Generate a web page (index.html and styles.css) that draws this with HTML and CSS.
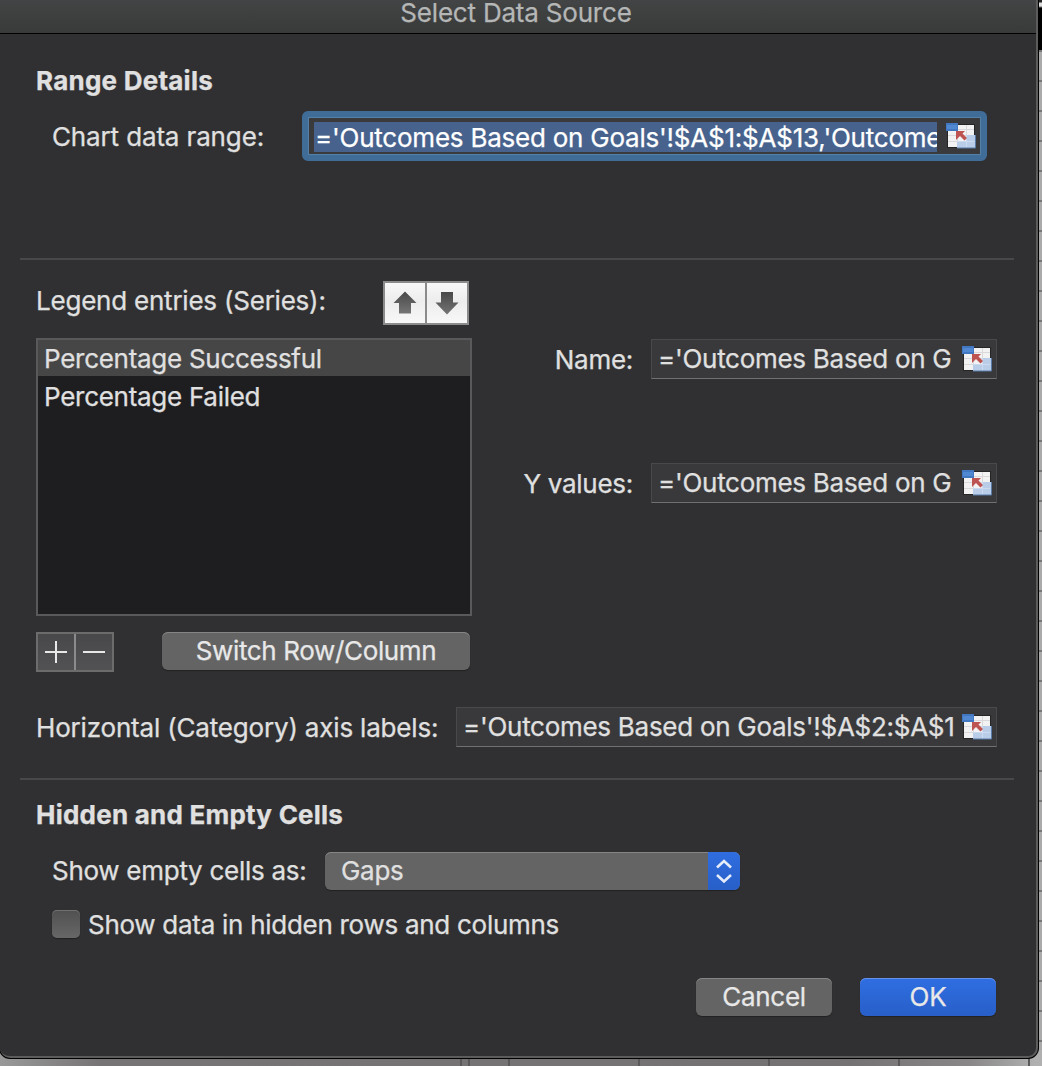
FILE: index.html
```html
<!DOCTYPE html>
<html lang="en">
<head>
<meta charset="utf-8">
<title>Select Data Source</title>
<link rel="stylesheet" href="styles.css">
</head>
<body>
<svg class="defs" width="0" height="0" aria-hidden="true">
  <symbol id="picker" viewBox="0 0 30 26">
    <rect x="1" y="1" width="28" height="24" fill="#252526"/>
    <rect x="2" y="2" width="26" height="22" fill="#f2f2f3"/>
    <path d="M2 12.500H28M2 18.500H28M11.500 2V24M20.500 2V24M12 6.500H28" stroke="#d9d9dc" fill="none"/>
    <path d="M20 12H29V25H11V18H20Z" fill="#b9cde9"/>
    <path d="M20.500 12V24M11 18.500H28" stroke="#cbdaee" fill="none"/>
    <path d="M11 25H29.500V12" stroke="#587ba8" fill="none"/>
    <rect x="0" y="0" width="12" height="8" fill="#4278c2"/>
    <rect x="1" y="2" width="10" height="4" fill="#5188d2"/>
    <path d="M10 8H19L16.500 10.500L21 15L18.500 17.500L14 13L10 17Z" fill="#bd5452"/>
  </symbol>
</svg>
<div class="desktop">
  <div class="sheet-right"></div>
  <div class="sheet-bottom"><i class="c1"></i><i class="c2"></i><i class="c3"></i><i class="c4"></i><i class="c5"></i><i class="c6"></i><i class="c7"></i></div>
  <main class="dialog">
    <header class="titlebar"><span class="t-title">Select Data Source</span></header>

    <section class="range">
      <h2 class="t-range">Range Details</h2>
      <div class="range-row">
        <label class="t-chart">Chart data range:</label>
        <div class="focus-field"><span class="selection"><span class="t-main">='Outcomes Based on Goals'!$A$1:$A$13,'Outcomes</span></span><svg class="picker"><use href="#picker"/></svg></div>
      </div>
    </section>

    <section class="series">
      <div class="left">
        <div class="legend-head">
          <span class="t-legend">Legend entries (Series):</span>
          <div class="arrows">
            <button><svg width="24" height="24" viewBox="0 0 24 24"><path d="M12 .5L23.500 12H18V22.500H6V12H.5Z" fill="url(#ag)"/><defs><linearGradient id="ag" x2="0" y2="1"><stop stop-color="#484848"/><stop offset="1" stop-color="#757575"/></linearGradient></defs></svg></button>
            <button><svg width="24" height="24" viewBox="0 0 24 24"><path d="M6 1H18V11.500H23.500L12 23.500L.5 11.500H6Z" fill="url(#ag)"/></svg></button>
          </div>
        </div>
        <ul class="list">
          <li class="selected"><span class="t-ps">Percentage Successful</span></li>
          <li><span class="t-pf">Percentage Failed</span></li>
        </ul>
        <div class="list-actions">
          <div class="plusminus">
            <button><svg width="22" height="22" viewBox="0 0 22 22"><path d="M0 11H22M11 0V22"/></svg></button>
            <button><svg width="22" height="22" viewBox="0 0 22 22"><path d="M0 11H22"/></svg></button>
          </div>
          <button class="btn switch"><span class="t-switch">Switch Row/Column</span></button>
        </div>
      </div>
      <div class="right">
        <label><span class="t-name">Name:</span></label>
        <div class="field"><span class="value"><span class="t-field">='Outcomes Based on G</span></span><svg class="picker"><use href="#picker"/></svg></div>
        <label><span class="t-y">Y values:</span></label>
        <div class="field"><span class="value"><span class="t-field">='Outcomes Based on G</span></span><svg class="picker"><use href="#picker"/></svg></div>
      </div>
    </section>

    <section class="axis">
      <label><span class="t-axis">Horizontal (Category) axis labels:</span></label>
      <div class="field"><span class="value"><span class="t-cat">='Outcomes Based on Goals'!$A$2:$A$13</span></span><svg class="picker"><use href="#picker"/></svg></div>
    </section>

    <section class="hidden-cells">
      <h2 class="t-hidden">Hidden and Empty Cells</h2>
      <div class="empty-row">
        <label class="t-empty">Show empty cells as:</label>
        <div class="select"><span class="t-gaps">Gaps</span><span class="stepper"><svg width="16" height="26" viewBox="0 0 16 26"><path d="M1 9.500L8 3L15 9.500M1 17L8 23.500L15 17"/></svg></span></div>
      </div>
      <div class="check-row"><span class="checkbox"></span><span class="t-show">Show data in hidden rows and columns</span></div>
    </section>

    <footer>
      <button class="btn"><span class="t-cancel">Cancel</span></button>
      <button class="btn primary"><span class="t-ok">OK</span></button>
    </footer>
  </main>
</div>
</body>
</html>
```

FILE: styles.css
```css
* { box-sizing: border-box; }
body { margin: 0; background: #777; overflow: hidden; -webkit-text-stroke: .25px currentColor; }
body, button { font-family: Inter, "Liberation Sans", sans-serif; font-size: 26px; line-height: 32px; color: #e0e0e0; letter-spacing: -.28px; }
button { border: 0; padding: 0; }
h2 { margin: 0; font-size: 26px; font-weight: 700; line-height: 32px; letter-spacing: .23px; }
svg { display: block; flex: none; }
span, label, h2, li { white-space: pre; }
.defs { position: absolute; }
.desktop { position: relative; width: 1042px; height: 1066px; overflow: hidden; }

.sheet-right { position: absolute; left: 1030px; top: 0; width: 12px; height: 1066px;
  background: linear-gradient(#222 0 2px, #ddd 3px 6px, #000 8px 50px, transparent 50px),
    repeating-linear-gradient(transparent 0 20px, #777 20px 22px, transparent 22px 30px), #aaa; }
.sheet-bottom { position: absolute; left: 0; top: 1050px; width: 1042px; height: 16px;
  background: linear-gradient(90deg, #999 0, #777475 100px, #757273 850px, #898788 970px, #b0b0b0 1035px); }
.sheet-bottom i { position: absolute; top: 0; width: 2px; height: 16px; background: #5b595a; }
.c1 { left: 460px; } .c2 { left: 468px; } .c3 { left: 508px; } .c4 { left: 638px; } .c5 { left: 768px; } .c6 { left: 898px; } .c7 { left: 1028px; }

.dialog { position: relative; width: 1038px; height: 1058px; background: #303032; border: solid #5c5c5c; border-width: 0 2px 2px 0; border-radius: 0 0 10px 10px; box-shadow: 0 0 0 1px #000; }
.titlebar { height: 34px; padding: 0 4px 0 0; background: linear-gradient(#424445, #393b3a); border-bottom: 1px solid #000; display: flex; justify-content: center; line-height: 26px; color: #b5b6b6; letter-spacing: -.2px; }

.range { height: 226px; margin: 0 22px 0 20px; padding: 31px 0 0 16px; border-bottom: 2px solid #48484a; }
.range-row { display: flex; padding: 14px 0 0 16px; align-items: center; }
.t-chart { width: 250px; letter-spacing: -.14px; padding-top: 2px; }
.focus-field { width: 685px; height: 50px; border: 6px solid #3f6d98; border-radius: 6px; background: #3a3a3c; box-shadow: inset 0 0 0 1px #5581a8; display: flex; align-items: center; padding: 0 5px 0 6px; }
.selection { width: 624px; height: 30px; margin: 2px 9px 0 0; padding-left: 1px; line-height: 32px; background: #47638d; color: #fff; overflow: hidden; letter-spacing: -.23px; }
.picker { width: 30px; height: 26px; }
.t-legend { letter-spacing: -.22px; }
.t-axis { letter-spacing: -.18px; }
.t-switch { letter-spacing: -.35px; }

.series { display: flex; padding: 21px 0 0 36px; }
.left { width: 436px; }
.legend-head { display: flex; justify-content: space-between; padding-right: 3px; height: 44px; line-height: 40px; }
.arrows { display: flex; width: 86px; height: 44px; border: 2px solid #8b8b8b; background: #8b8b8b; gap: 2px; }
.arrows button { width: 40px; height: 40px; display: grid; place-items: center; background: linear-gradient(#f8f8f8, #ededed 45%, #f8f8f8); }
.list { list-style: none; margin: 13px 0 0; padding: 0; height: 278px; border: 2px solid #59595b; background: #1e1e20; }
.list li { height: 38px; line-height: 38px; padding-left: 6px; }
.list .selected { height: 36px; background: #464646; margin-bottom: 2px; }
.list-actions { display: flex; margin-top: 16px; gap: 48px; }
.plusminus { display: flex; width: 78px; height: 40px; border: 2px solid #6c6c6d; }
.plusminus button { width: 36px; display: grid; place-items: center; background: linear-gradient(#48484a, #525254); }
.plusminus button + button { border-left: 2px solid #8b8b8c; width: 38px; }
.plusminus path { stroke: #e8e8e8; stroke-width: 2; }
.btn { width: 136px; height: 38px; border-radius: 6px; background: #646464; box-shadow: inset 0 1px #858585, 0 1px 1px #222; display: grid; place-items: center; color: #e8e8e8; }
.switch { width: 308px; }
.right { display: grid; grid-template-columns: 161px 346px; column-gap: 18px; grid-auto-rows: 40px; row-gap: 84px; padding-top: 58px; }
.right label { text-align: right; line-height: 42px; }
.field { height: 40px; display: flex; align-items: center; background: #39393b; border: 1px solid #49494b; border-bottom-color: #707071; padding: 0 4px 0 6px; }
.value { flex: 1; overflow: hidden; margin-right: 7px; min-width: 0; }

.axis { height: 108px; margin: 0 22px 0 20px; padding: 35px 17px 0 16px; border-bottom: 2px solid #48484a; display: flex; }
.axis label { width: 420px; flex: none; line-height: 42px; }
.axis .field { flex: 1; min-width: 0; }

.hidden-cells { padding: 19px 0 0 36px; }
.empty-row { display: flex; padding: 21px 0 0 16px; line-height: 38px; }
.t-empty { width: 273px; flex: none; }
.select { width: 415px; height: 38px; border-radius: 6px; overflow: hidden; background: #646464; box-shadow: inset 0 1px #858585, 0 1px 1px #222; padding-left: 16px; display: flex; justify-content: space-between; }
.stepper { width: 32px; background: linear-gradient(#2f6de0, #285fc8); display: grid; place-items: center; }
.stepper path { fill: none; stroke: #e4ecfa; stroke-width: 2.6; }
.check-row { display: flex; gap: 8px; padding: 20px 0 0 16px; line-height: 30px; }
.checkbox { width: 28px; height: 28px; border-radius: 5px; background: linear-gradient(#505050, #676767); box-shadow: inset 0 1px #707070, 0 1px 1px #222; }
footer { display: flex; justify-content: flex-end; gap: 28px; padding: 38px 40px 0 0; }
.primary { background: linear-gradient(#2f6ee2, #285fc8); box-shadow: inset 0 1px #6593e8, 0 1px 1px #222; }
```
